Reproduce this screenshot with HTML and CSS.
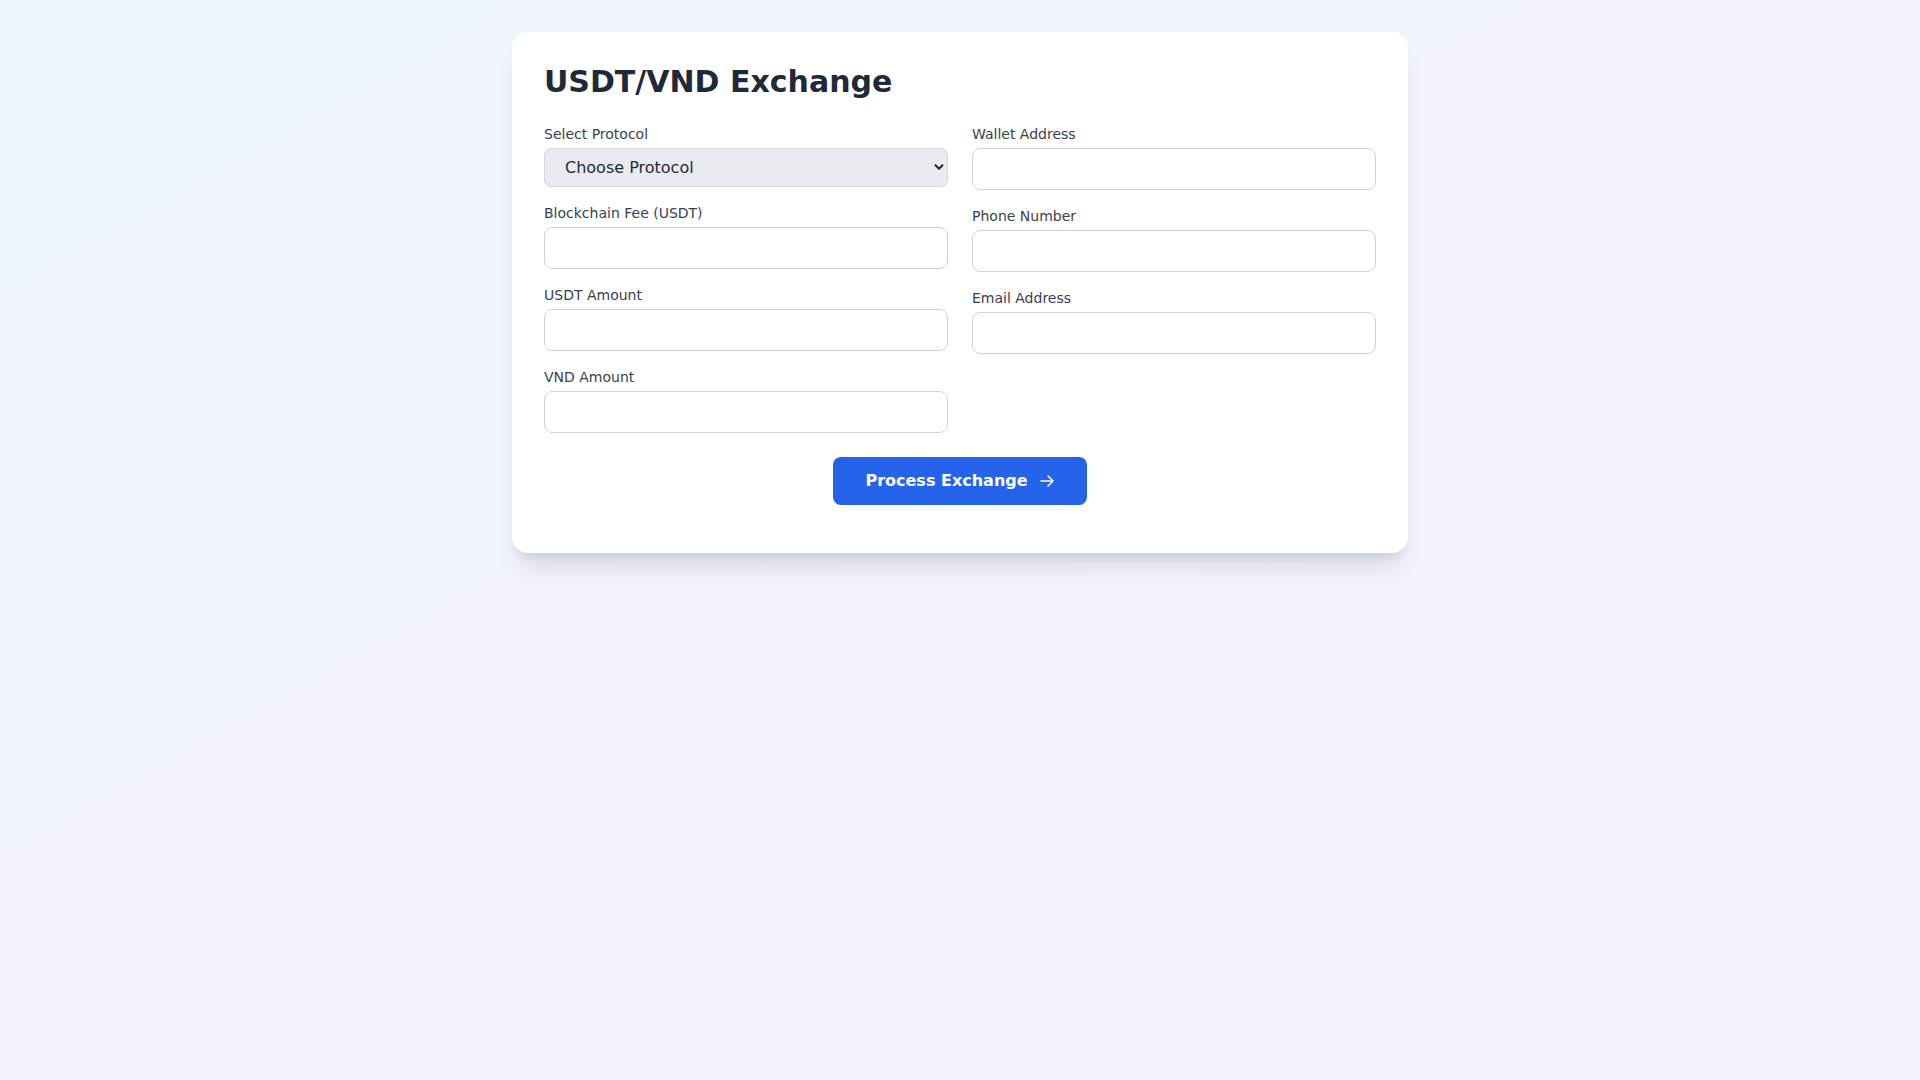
FILE: index.html
```html
<!DOCTYPE html>
<html lang="en">
<head>
<meta charset="utf-8">
<title>USDT/VND Exchange</title>
<link rel="stylesheet" href="styles.css">
</head>
<body>
<main class="page">
  <section class="card">
    <h1 class="title">USDT/VND Exchange</h1>
    <form class="form">
      <div class="grid">
        <div class="col">
          <div class="field">
            <label class="label" for="protocol">Select Protocol</label>
            <div class="select-wrap">
              <select id="protocol" class="select">
                <option>Choose Protocol</option>
              </select>
              <svg class="chevron" width="10" height="10" viewBox="0 0 10 10" aria-hidden="true"><path d="M1.5 3.2L5 6.7 8.5 3.2" fill="none" stroke="#1f2937" stroke-width="2" stroke-linecap="round" stroke-linejoin="round"/></svg>
            </div>
          </div>
          <div class="field">
            <label class="label" for="fee">Blockchain Fee (USDT)</label>
            <input id="fee" class="input" type="text">
          </div>
          <div class="field">
            <label class="label" for="usdt">USDT Amount</label>
            <input id="usdt" class="input" type="text">
          </div>
          <div class="field">
            <label class="label" for="vnd">VND Amount</label>
            <input id="vnd" class="input" type="text">
          </div>
        </div>
        <div class="col">
          <div class="field">
            <label class="label" for="wallet">Wallet Address</label>
            <input id="wallet" class="input" type="text">
          </div>
          <div class="field">
            <label class="label" for="phone">Phone Number</label>
            <input id="phone" class="input" type="text">
          </div>
          <div class="field">
            <label class="label" for="email">Email Address</label>
            <input id="email" class="input" type="text">
          </div>
        </div>
      </div>
      <div class="actions">
        <button type="button" class="btn">
          <span>Process Exchange</span>
          <svg class="arrow" width="16" height="16" viewBox="0 0 24 24" aria-hidden="true"><path d="M13.5 4.5L21 12m0 0l-7.5 7.5M21 12H3" fill="none" stroke="#ffffff" stroke-width="2.2" stroke-linecap="round" stroke-linejoin="round"/></svg>
        </button>
      </div>
    </form>
  </section>
</main>
</body>
</html>
```

FILE: styles.css
```css
* { box-sizing: border-box; }
html, body { margin: 0; padding: 0; }
body {
  font-family: "DejaVu Sans", sans-serif;
  min-height: 100vh;
  background: linear-gradient(to bottom right, #eff6ff, #f5f3ff);
  color: #1f2937;
}
.page {
  padding-top: 32px;
  display: flex;
  justify-content: center;
}
.card {
  width: 896px;
  background: #ffffff;
  border-radius: 16px;
  padding: 32px 32px 48px;
  box-shadow: 0 20px 25px -5px rgba(0,0,0,0.1), 0 8px 10px -6px rgba(0,0,0,0.1);
}
.title {
  margin: 0 0 24px;
  font-size: 30px;
  line-height: 36px;
  font-weight: 700;
  color: #1f2937;
}
.form { margin: 0; }
.grid {
  display: grid;
  grid-template-columns: 1fr 1fr;
  column-gap: 24px;
  align-items: start;
}
.col {
  display: flex;
  flex-direction: column;
  gap: 16px;
}
.field {
  display: flex;
  flex-direction: column;
  gap: 4px;
}
.label {
  font-size: 14px;
  line-height: 20px;
  color: #374151;
}
.input {
  display: block;
  width: 100%;
  height: 42px;
  padding: 8px 12px;
  border: 1px solid #d1d5db;
  border-radius: 8px;
  background: #ffffff;
  font-family: inherit;
  font-size: 16px;
  outline: none;
}
.select-wrap { position: relative; }
.select {
  display: block;
  width: 100%;
  height: 39px;
  padding: 0 30px 0 20px;
  border: 1px solid #d5d8df;
  border-radius: 7px;
  background: #e9ebf0;
  font-family: inherit;
  font-size: 16px;
  color: #1f2937;
  -webkit-appearance: none;
  appearance: none;
  outline: none;
}
.chevron {
  position: absolute;
  right: 4px;
  top: 14px;
  pointer-events: none;
}
.actions {
  display: flex;
  justify-content: center;
  margin-top: 24px;
}
.btn {
  display: flex;
  align-items: center;
  gap: 11px;
  height: 48px;
  padding: 0 32px;
  border: none;
  border-radius: 8px;
  background: #2563eb;
  color: #ffffff;
  font-family: inherit;
  font-size: 16px;
  font-weight: 700;
  line-height: 24px;
  cursor: pointer;
}
.arrow { display: block; }
```
